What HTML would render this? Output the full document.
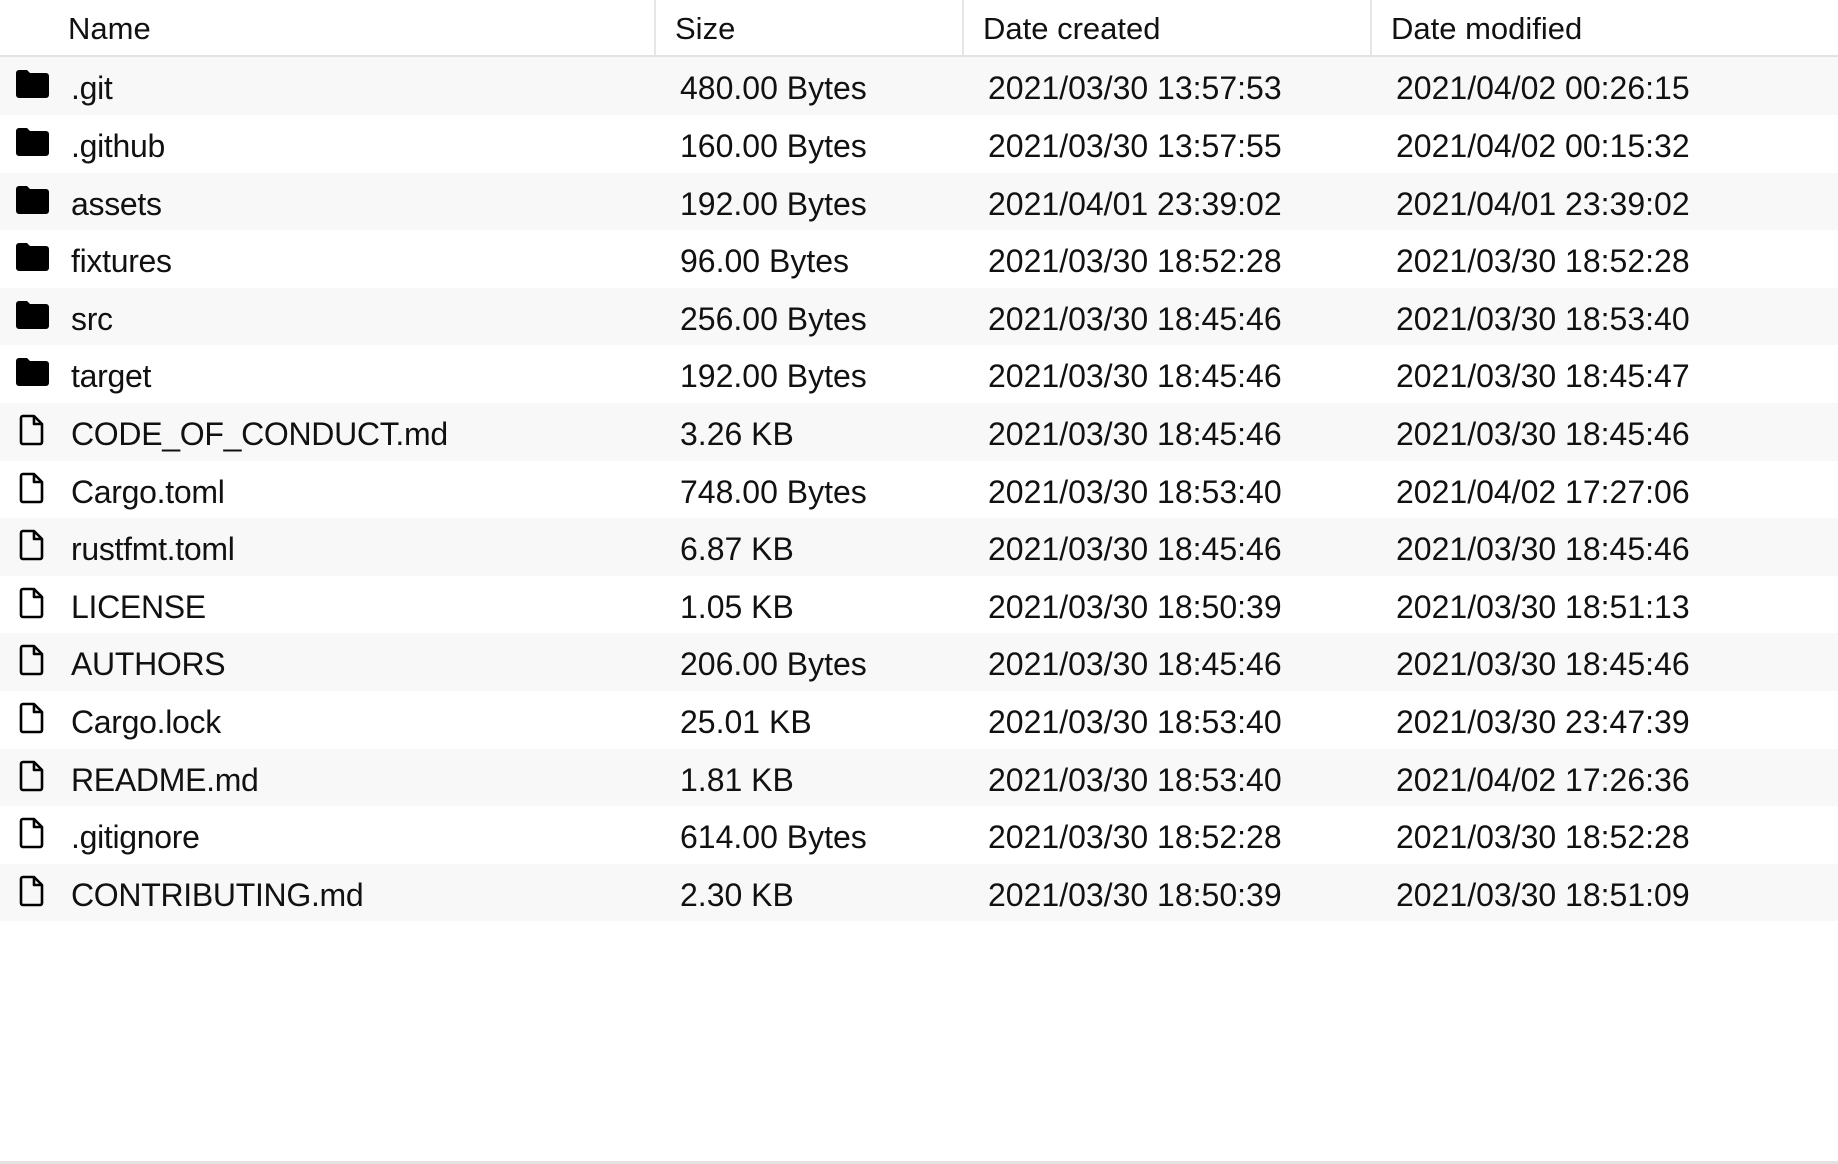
<!DOCTYPE html>
<html><head><meta charset="utf-8"><style>
html,body{margin:0;padding:0;background:#fff;width:1838px;height:1164px;overflow:hidden;font-family:"Liberation Sans",sans-serif;color:#111}
.hdr{position:absolute;left:0;top:0;width:1838px;height:58px;border-bottom:3px solid #e2e2e2;box-sizing:border-box}
.hdr span{position:absolute;top:10px;font-size:31px;line-height:38px}
.div{position:absolute;top:0;width:2px;height:55px;background:#e6e6e6}
.row{position:absolute;left:0;width:1838px;height:57.6px}
.row.o{background:#f8f8f8}
.row span{position:absolute;top:1px;font-size:32px;line-height:60px;white-space:nowrap}
.row span.n{letter-spacing:-0.3px}
.row svg{position:absolute}
.bot{position:absolute;left:0;top:1161px;width:1838px;height:3px;background:#e2e2e2}
</style></head><body>
<div class="hdr">
<span style="left:68px">Name</span><div class="div" style="left:654px"></div>
<span style="left:675px">Size</span><div class="div" style="left:962px"></div>
<span style="left:983px">Date created</span><div class="div" style="left:1370px"></div>
<span style="left:1391px">Date modified</span>
</div>
<div id="rows"></div>
<div class="bot"></div>
<script>
var d=[["d",".git","480.00 Bytes","2021/03/30 13:57:53","2021/04/02 00:26:15"],
["d",".github","160.00 Bytes","2021/03/30 13:57:55","2021/04/02 00:15:32"],
["d","assets","192.00 Bytes","2021/04/01 23:39:02","2021/04/01 23:39:02"],
["d","fixtures","96.00 Bytes","2021/03/30 18:52:28","2021/03/30 18:52:28"],
["d","src","256.00 Bytes","2021/03/30 18:45:46","2021/03/30 18:53:40"],
["d","target","192.00 Bytes","2021/03/30 18:45:46","2021/03/30 18:45:47"],
["f","CODE_OF_CONDUCT.md","3.26 KB","2021/03/30 18:45:46","2021/03/30 18:45:46"],
["f","Cargo.toml","748.00 Bytes","2021/03/30 18:53:40","2021/04/02 17:27:06"],
["f","rustfmt.toml","6.87 KB","2021/03/30 18:45:46","2021/03/30 18:45:46"],
["f","LICENSE","1.05 KB","2021/03/30 18:50:39","2021/03/30 18:51:13"],
["f","AUTHORS","206.00 Bytes","2021/03/30 18:45:46","2021/03/30 18:45:46"],
["f","Cargo.lock","25.01 KB","2021/03/30 18:53:40","2021/03/30 23:47:39"],
["f","README.md","1.81 KB","2021/03/30 18:53:40","2021/04/02 17:26:36"],
["f",".gitignore","614.00 Bytes","2021/03/30 18:52:28","2021/03/30 18:52:28"],
["f","CONTRIBUTING.md","2.30 KB","2021/03/30 18:50:39","2021/03/30 18:51:09"]];
var folder='<svg style="left:16px;top:13px" width="33" height="28" viewBox="0 0 33 28"><path d="M3 0h8l3 3h16a3 3 0 0 1 3 3v19a3 3 0 0 1-3 3H3a3 3 0 0 1-3-3V3a3 3 0 0 1 3-3z" fill="#000"/></svg>';
var file='<svg style="left:19px;top:11px" width="26" height="32" viewBox="0 0 26 32"><path d="M4 2h11l8 8v18a2 2 0 0 1-2 2H4a2 2 0 0 1-2-2V4a2 2 0 0 1 2-2z" fill="none" stroke="#000" stroke-width="2.6" stroke-linejoin="round"/><path d="M15 2v8h8" fill="none" stroke="#000" stroke-width="2.6" stroke-linejoin="round"/></svg>';
var h='';
d.forEach(function(r,i){h+='<div class="row'+(i%2==0?' o':'')+'" style="top:'+(57.4+i*57.6)+'px">'+(r[0]=='d'?folder:file)+'<span class="n" style="left:71px">'+r[1]+'</span><span style="left:680px">'+r[2]+'</span><span style="left:988px">'+r[3]+'</span><span style="left:1396px">'+r[4]+'</span></div>';});
document.getElementById('rows').innerHTML=h;
</script>
</body></html>
